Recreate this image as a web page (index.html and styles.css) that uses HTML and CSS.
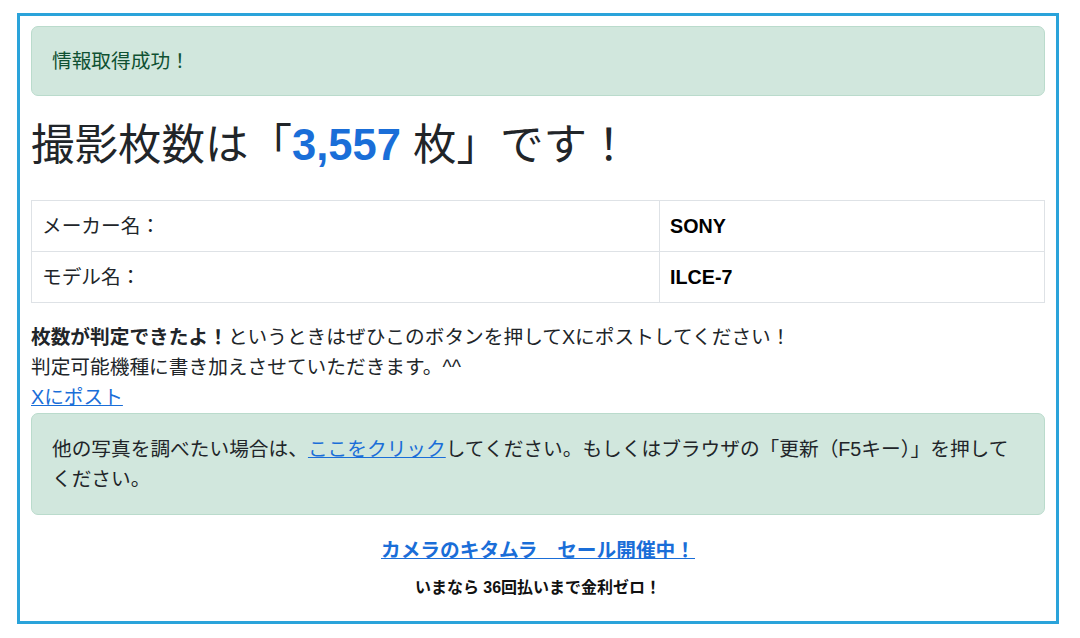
FILE: index.html
```html
<!DOCTYPE html>
<html lang="ja">
<head>
  <meta charset="UTF-8" />
  <meta name="viewport" content="width=device-width, initial-scale=1.0"/>
  <title>撮影枚数チェッカー</title>
  <link rel="stylesheet" href="styles.css">
</head>
<body>
  <div class="frame">
    <div class="alert alert-ok">情報取得成功！</div>

    <h1 class="result">撮影枚数は「<span class="count">3,557</span> 枚」です！</h1>

    <table class="info-table">
      <tbody>
        <tr>
          <td class="label">メーカー名：</td>
          <td class="value">SONY</td>
        </tr>
        <tr>
          <td class="label">モデル名：</td>
          <td class="value">ILCE-7</td>
        </tr>
      </tbody>
    </table>

    <p class="share">
      <strong>枚数が判定できたよ！</strong>というときはぜひこのボタンを押してXにポストしてください！<br>
      判定可能機種に書き加えさせていただきます。^^<br>
      <a href="#">Xにポスト</a>
    </p>

    <div class="alert alert-retry">
      他の写真を調べたい場合は、<a href="#">ここをクリック</a>してください。もしくはブラウザの「更新（F5キー）」を押して<span class="keep">ください。</span>
    </div>

    <div class="promo">
      <a href="#" class="promo-link">カメラのキタムラ　セール開催中！</a>
      <p class="promo-note">いまなら 36回払いまで金利ゼロ！</p>
    </div>
  </div>
</body>
</html>
```

FILE: styles.css
```css
body {
  margin: 0;
  font-family: "Liberation Sans", "Noto Sans CJK JP", sans-serif;
  font-size: 19.7px;
  line-height: 30px;
  color: #212529;
  background: #fff;
}

a {
  color: #1a6ed8;
}

.frame {
  margin: 13px 21px 0 17px;
  border: 3px solid #2aa3da;
  padding: 10px 11px 11px;
}

.alert {
  background: #d1e7dd;
  border: 1px solid #badbcc;
  border-radius: 7px;
  padding: 19px 20px;
}

.alert-ok {
  color: #0f5132;
}

.alert-retry {
  padding: 20px 20px;
  margin: 1px 0 20px;
}

.keep {
  white-space: nowrap;
}

.result {
  font-size: 43.5px;
  font-weight: normal;
  line-height: 56px;
  margin: 21px 0 27px;
}

.count {
  color: #1a6ed8;
  font-weight: bold;
}

.info-table {
  width: 100%;
  border-collapse: collapse;
  margin-bottom: 19px;
}

.info-table td {
  border: 1px solid #dee2e6;
  padding: 10px 10px;
}

.info-table .label {
  width: 62%;
}

.info-table .value {
  font-weight: bold;
  color: #000;
}

.share {
  margin: 0 0 1px;
}

.share strong {
  font-weight: bold;
}

.promo {
  text-align: center;
}

.promo-link {
  font-weight: bold;
}

.promo-note {
  font-size: 16px;
  font-weight: bold;
  line-height: 24px;
  margin: 11px 0 10px;
  color: #111;
}
```
